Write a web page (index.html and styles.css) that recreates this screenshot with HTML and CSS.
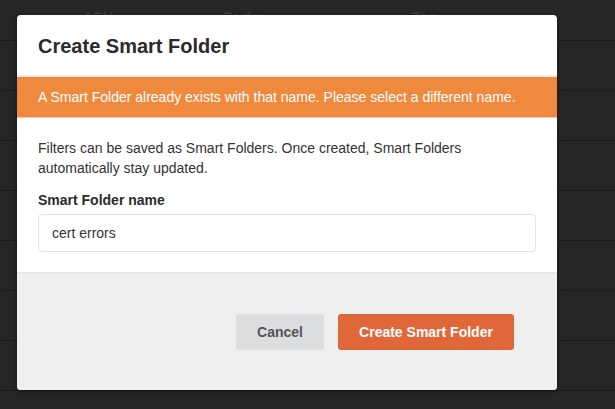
FILE: index.html
```html
<!DOCTYPE html>
<html lang="en">
<head>
    <meta charset="UTF-8">
    <meta name="viewport" content="width=device-width, initial-scale=1.0">
    <title>Create Smart Folder</title>
    <link rel="stylesheet" href="styles.css">
</head>
<body>
    <!-- table behind the dialog -->
    <div class="table">
        <div class="row head">
            <span class="col asn">ASN</span>
            <span class="col ports">Ports</span>
            <span class="col tag">Tag</span>
        </div>
        <div class="row"></div>
        <div class="row"></div>
        <div class="row"></div>
        <div class="row"></div>
        <div class="row"></div>
        <div class="row"></div>
        <div class="row"></div>
    </div>

    <div class="modal">
        <div class="modal-header">
            <h2>Create Smart Folder</h2>
        </div>
        <div class="alert">A Smart Folder already exists with that name. Please select a different name.</div>
        <div class="modal-body">
            <p>Filters can be saved as Smart Folders. Once created, Smart Folders automatically stay updated.</p>
            <label for="folderName">Smart Folder name</label>
            <input type="text" id="folderName" value="cert errors">
        </div>
        <div class="modal-footer">
            <button type="button" class="btn btn-cancel">Cancel</button>
            <button type="button" class="btn btn-primary">Create Smart Folder</button>
        </div>
    </div>
</body>
</html>
```

FILE: styles.css
```css
body {
    margin: 0;
    background-color: #262626;
    font-family: "Liberation Sans", Arial, sans-serif;
    height: 409px;
    overflow: hidden;
    position: relative;
}
.table {
    width: 100%;
}
.row {
    height: 49px;
    border-bottom: 1px solid #1c1c1c;
    position: relative;
}
.row.head {
    height: 40px;
    display: flex;
}
.col {
    position: absolute;
    top: 9px;
    color: #3b3b3b;
    font-weight: bold;
    font-size: 14px;
}
.asn { left: 83px; }
.ports { left: 223px; }
.tag { left: 412px; }

/* Dialog */
.modal {
    position: absolute;
    left: 17px;
    top: 15px;
    width: 540px;
    height: 375px;
    background-color: #fff;
    border-radius: 4px;
    box-shadow: 0 1px 4px rgba(0, 0, 0, 0.5);
    display: flex;
    flex-direction: column;
    overflow: hidden;
}
.modal-header {
    height: 60px;
    padding: 0 21px;
    display: flex;
    align-items: center;
    border-bottom: 2px solid #ebebeb;
}
.modal-header h2 {
    margin: 0;
    font-size: 20px;
    color: #2b2b2b;
    padding-top: 2px;
}
.alert {
    background-color: #ef893e;
    color: #fff;
    font-size: 14px;
    height: 40px;
    line-height: 40px;
    padding: 0 21px;
    border-bottom: 1px solid #f3c9a6;
}
.modal-body {
    padding: 20px 21px 20px;
    border-bottom: 2px solid #e6e6e6;
}
.modal-body p {
    margin: 0 0 14px;
    font-size: 14px;
    line-height: 20px;
    color: #333;
}
.modal-body label {
    display: block;
    font-size: 14px;
    font-weight: bold;
    color: #2b2b2b;
    margin-bottom: 6px;
}
.modal-body input {
    display: block;
    box-sizing: border-box;
    width: 100%;
    height: 38px;
    padding: 0 13px;
    border: 1px solid #e3e3e3;
    border-radius: 4px;
    font-family: inherit;
    font-size: 14px;
    color: #333;
    outline: none;
}
.modal-footer {
    flex: 1;
    background-color: #efefef;
    display: flex;
    justify-content: flex-end;
    align-items: flex-start;
    gap: 14px;
    padding: 40px 43px 0;
}
.btn {
    height: 36px;
    border: none;
    border-radius: 3px;
    font-family: inherit;
    font-size: 14px;
    font-weight: bold;
    cursor: pointer;
}
.btn-cancel {
    width: 88px;
    background-color: #dcdddf;
    color: #555;
}
.btn-primary {
    width: 176px;
    background-color: #e0673a;
    color: #fff;
}
```
